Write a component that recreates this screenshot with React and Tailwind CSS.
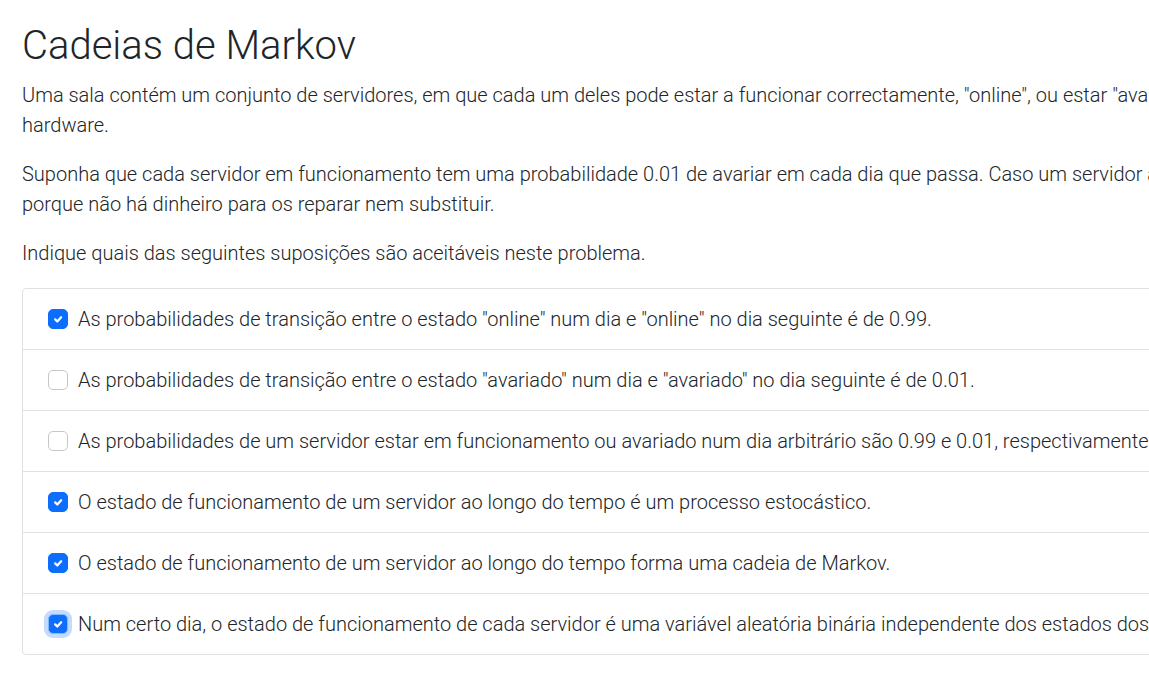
import React, { useState } from 'react';

const options = [
  { text: 'As probabilidades de transição entre o estado "online" num dia e "online" no dia seguinte é de 0.99.', checked: true },
  { text: 'As probabilidades de transição entre o estado "avariado" num dia e "avariado" no dia seguinte é de 0.01.', checked: false },
  { text: 'As probabilidades de um servidor estar em funcionamento ou avariado num dia arbitrário são 0.99 e 0.01, respectivamente.', checked: false },
  { text: 'O estado de funcionamento de um servidor ao longo do tempo é um processo estocástico.', checked: true },
  { text: 'O estado de funcionamento de um servidor ao longo do tempo forma uma cadeia de Markov.', checked: true },
  { text: 'Num certo dia, o estado de funcionamento de cada servidor é uma variável aleatória binária independente dos estados dos outros servidores.', checked: true, focus: true },
];

const Check = ({ checked, focus, onClick }) => (
  <span
    onClick={onClick}
    className={`shrink-0 w-[20px] h-[20px] rounded-[5px] border flex items-center justify-center cursor-pointer ${
      checked ? 'bg-[#0d6efd] border-[#0d6efd]' : 'bg-white border-[#c4c7ca]'
    } ${focus ? 'ring-[4px] ring-[#0d6efd]/25 border-[#86b7fe]' : ''}`}
  >
    {checked && (
      <svg viewBox="0 0 20 20" className="w-[14px] h-[14px]">
        <path fill="none" stroke="#fff" strokeLinecap="round" strokeLinejoin="round" strokeWidth="3.2" d="M6 10.5l3 3l5.5-6" />
      </svg>
    )}
  </span>
);

export default function App() {
  const [state, setState] = useState(options.map((o) => o.checked));

  return (
    <div className="w-[1149px] h-[677px] overflow-hidden bg-white">
      <div className="w-[1800px] pl-[22px] pt-[22px] text-[#212529] font-['Roboto',sans-serif] font-light">
        <h1 className="text-[40px] leading-[48px] font-light mb-[10px]">Cadeias de Markov</h1>
        <p className="text-[20px] leading-[30px] mb-[19px] whitespace-nowrap">
          Uma sala contém um conjunto de servidores, em que cada um deles pode estar a funcionar correctamente, "online", ou estar "avariado" por algum problema de
          <br />
          hardware.
        </p>
        <p className="text-[20px] leading-[30px] mb-[19px] whitespace-nowrap">
          Suponha que cada servidor em funcionamento tem uma probabilidade 0.01 de avariar em cada dia que passa. Caso um servidor avarie, fica avariado para sempre,
          <br />
          porque não há dinheiro para os reparar nem substituir.
        </p>
        <p className="text-[20px] leading-[30px] mb-[20px]">Indique quais das seguintes suposições são aceitáveis neste problema.</p>
        <ul className="w-[1500px] border border-[#dfe1e3] rounded-[4px]">
          {options.map((o, i) => (
            <li
              key={i}
              className={`flex items-center gap-[10px] pl-[25px] py-[15px] text-[20px] leading-[30px] whitespace-nowrap ${
                i > 0 ? 'border-t border-[#dfe1e3]' : ''
              }`}
            >
              <Check
                checked={state[i]}
                focus={o.focus}
                onClick={() => setState((s) => s.map((v, j) => (j === i ? !v : v)))}
              />
              <span>{o.text}</span>
            </li>
          ))}
        </ul>
      </div>
    </div>
  );
}
